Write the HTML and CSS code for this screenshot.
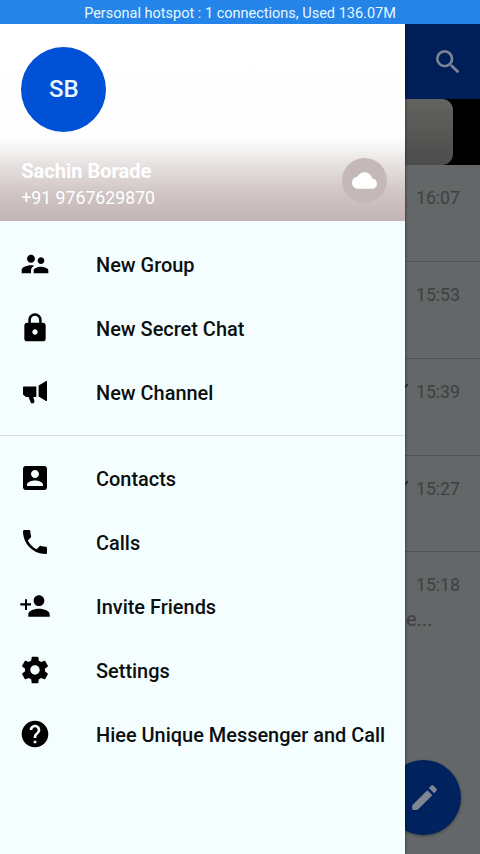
FILE: index.html
```html
<!DOCTYPE html>
<html lang="en">
<head>
<meta charset="utf-8">
<title>Hiee Messenger</title>
<link rel="stylesheet" href="styles.css">
</head>
<body>
<div class="status">Personal hotspot : 1 connections, Used 136.07M</div>
<div class="screen">
  <main class="chats">
    <header class="toolbar">
      <svg class="search" viewBox="0 0 24 24"><path d="M15.500 14h-.79l-.28-.27A6.470 6.470 0 0 0 16 9.500 6.500 6.500 0 1 0 9.500 16c1.610 0 3.090-.59 4.230-1.570l.27.28v.79l5 4.990L20.490 19l-4.990-5zm-6 0C7.010 14 5 11.990 5 9.500S7.010 5 9.500 5 14 7.010 14 9.500 11.990 14 9.500 14z"/></svg>
    </header>
    <div class="banner"><div class="banner-card"></div></div>
    <div class="chat"><div class="meta"><span class="time">16:07</span></div></div>
    <div class="chat"><div class="meta"><span class="time">15:53</span></div></div>
    <div class="chat"><div class="meta"><svg class="tick" viewBox="0 0 12 9"><path d="M1 4.500 4.500 8 11 1"/></svg><span class="time">15:39</span></div></div>
    <div class="chat"><div class="meta"><svg class="tick" viewBox="0 0 12 9"><path d="M1 4.500 4.500 8 11 1"/></svg><span class="time">15:27</span></div></div>
    <div class="chat last"><div class="meta"><span class="time">15:18</span></div><div class="preview">e...</div></div>
    <div class="fab"><svg viewBox="0 0 24 24"><path d="M4 16.800 14.100 6.700l3.600 3.600L7.600 20.400q-.5.600-1.300.6H4.100q-1.100 0-1.100-1.100v-1.600q0-.9 1-1.500zM20.710 7.040a1 1 0 0 0 0-1.410l-2.340-2.340a1 1 0 0 0-1.410 0l-1.830 1.830 3.750 3.750 1.830-1.830z"/></svg></div>
  </main>
  <aside class="drawer">
    <div class="profile">
      <div class="avatar">SB</div>
      <div class="identity">
        <div>
          <div class="name">Sachin Borade</div>
          <div class="phone">+91 9767629870</div>
        </div>
        <div class="cloud"><svg viewBox="0 0 24 24"><path d="M19.350 10.040A7.490 7.490 0 0 0 12 4C9.110 4 6.600 5.640 5.350 8.040A5.994 5.994 0 0 0 0 14c0 3.310 2.690 6 6 6h13c2.760 0 5-2.240 5-5 0-2.640-2.050-4.780-4.650-4.960z"/></svg></div>
      </div>
    </div>
    <nav class="menu">
      <div class="item"><svg viewBox="0 0 24 24"><path d="M16.500 12c1.380 0 2.490-1.120 2.490-2.500S17.880 7 16.500 7 14 8.120 14 9.500s1.120 2.500 2.500 2.500zM9 11c1.660 0 2.990-1.340 2.990-3S10.660 5 9 5 6 6.340 6 8s1.340 3 3 3zm7.500 3c-1.830 0-5.500.92-5.500 2.750V19h11v-2.250c0-1.830-3.670-2.750-5.500-2.750zM9 13c-2.330 0-7 1.170-7 3.500V19h7v-2.250c0-.85.33-2.340 2.370-3.470C10.500 13.100 9.660 13 9 13z"/></svg><span>New Group</span></div>
      <div class="item"><svg viewBox="0 0 24 24"><path d="M18 8h-1V6c0-2.760-2.240-5-5-5S7 3.240 7 6v2H6c-1.100 0-2 .9-2 2v10c0 1.100.9 2 2 2h12c1.100 0 2-.9 2-2V10c0-1.100-.9-2-2-2zm-6 9c-1.100 0-2-.9-2-2s.9-2 2-2 2 .9 2 2-.9 2-2 2zm3.100-9H8.900V6c0-1.710 1.390-3.100 3.100-3.100s3.100 1.390 3.100 3.100v2z"/></svg><span>New Secret Chat</span></div>
      <div class="item"><svg viewBox="0 0 24 24"><path d="M3.600 7.800H13v8h-2.300l.9 3.200-.5 1.400H9L7.200 15.800H5.200L3 13.800V8.300zM14.700 7.200 20.400 3.700H21v15h-.7l-5.600-3.400z"/></svg><span>New Channel</span></div>
      <hr>
      <div class="item"><svg viewBox="0 0 24 24"><path d="M3 5v14c0 1.100.89 2 2 2h14c1.100 0 2-.9 2-2V5c0-1.100-.9-2-2-2H5c-1.110 0-2 .9-2 2zm12 4c0 1.660-1.340 3-3 3s-3-1.340-3-3 1.340-3 3-3 3 1.340 3 3zm-9 8c0-2 4-3.100 6-3.100s6 1.100 6 3.100v1H6v-1z"/></svg><span>Contacts</span></div>
      <div class="item"><svg viewBox="0 0 24 24"><path d="M6.620 10.790c1.440 2.830 3.760 5.140 6.590 6.590l2.200-2.200c.27-.27.67-.36 1.020-.24 1.120.37 2.330.57 3.570.57.55 0 1 .45 1 1V20c0 .55-.45 1-1 1C10.610 21 3 13.390 3 4c0-.55.450-1 1-1h3.500c.55 0 1 .45 1 1 0 1.250.2 2.450.57 3.570.110.350.030.740-.25 1.020l-2.200 2.200z"/></svg><span>Calls</span></div>
      <div class="item"><svg viewBox="0 0 24 24"><path d="M15 12c2.210 0 4-1.790 4-4s-1.790-4-4-4-4 1.790-4 4 1.790 4 4 4zm-9-2V7H4.500v3H1v1.600h3.500V15H6v-3.400h3V10H6zm9 4c-2.670 0-8 1.340-8 4v2h16v-2c0-2.660-5.330-4-8-4z"/></svg><span>Invite Friends</span></div>
      <div class="item"><svg viewBox="0 0 24 24"><path d="M19.430 12.980c.04-.32.07-.64.07-.98s-.03-.66-.07-.98l2.110-1.650c.19-.15.24-.42.120-.64l-2-3.460c-.12-.22-.39-.3-.61-.22l-2.490 1c-.52-.4-1.080-.73-1.690-.98l-.38-2.650C14.460 2.180 14.250 2 14 2h-4c-.25 0-.46.180-.49.420l-.38 2.650c-.61.25-1.170.59-1.690.98l-2.490-1c-.23-.09-.49 0-.61.22l-2 3.460c-.13.22-.07.49.12.64l2.110 1.650c-.04.32-.07.65-.07.98s.03.66.07.98l-2.110 1.650c-.19.15-.24.42-.12.64l2 3.460c.12.22.39.3.61.22l2.490-1c.52.4 1.080.73 1.690.98l.38 2.650c.03.24.24.42.49.42h4c.25 0 .46-.18.49-.42l.38-2.650c.61-.25 1.170-.59 1.690-.98l2.490 1c.23.09.49 0 .61-.22l2-3.460c.12-.22.07-.49-.12-.64l-2.110-1.650zM12 15.500c-1.930 0-3.500-1.570-3.500-3.500s1.570-3.500 3.500-3.500 3.500 1.570 3.500 3.500-1.570 3.500-3.500 3.500z"/></svg><span>Settings</span></div>
      <div class="item"><svg viewBox="0 0 24 24"><path d="M12 2C6.480 2 2 6.480 2 12s4.480 10 10 10 10-4.480 10-10S17.520 2 12 2zm1 17h-2v-2h2v2zm2.070-7.750-.9.920C13.450 12.900 13 13.500 13 15h-2v-.5c0-1.100.45-2.100 1.170-2.830l1.240-1.260c.37-.36.59-.86.59-1.410 0-1.100-.9-2-2-2s-2 .9-2 2H8c0-2.210 1.790-4 4-4s4 1.790 4 4c0 .88-.36 1.680-.93 2.250z"/></svg><span>Hiee Unique Messenger and Call</span></div>
    </nav>
  </aside>
</div>
</body>
</html>
```
FILE: styles.css
```css
* { box-sizing: border-box; }
body {
  margin: 0;
  height: 854px;
  overflow: hidden;
  display: flex;
  flex-direction: column;
  font-family: Roboto, "Liberation Sans", sans-serif;
}
.status {
  height: 24px;
  flex: none;
  background: #2484e8;
  color: #e6f8ff;
  font-size: 14.500px;
  line-height: 27px;
  text-align: center;
  white-space: nowrap;
}
.screen { position: relative; flex: 1; }
.chats { height: 100%; background: #636767; }
.toolbar {
  height: 75px;
  background: #001f58;
  display: flex;
  justify-content: flex-end;
  align-items: center;
  padding-right: 16px;
}
.search { width: 32px; height: 32px; fill: #7c8697; }
.banner { height: 66px; background: #000; }
.banner-card {
  width: 453px;
  height: 66px;
  border-radius: 11px;
  background: linear-gradient(#636360, #4c4c4c);
}
.chat {
  height: 96.700px;
  border-bottom: 1px solid #505353;
  padding: 23px 20px 0 0;
  color: #3e4141;
}
.chat:nth-of-type(2) { height: 97.200px; }
.chat.last { border: 0; }
.meta { display: flex; justify-content: flex-end; }
.time { font-size: 17.700px; line-height: 21px; }
.tick { width: 13px; height: 10px; margin: 1px 7px 0 0; fill: none; stroke: #17351f; stroke-width: 1.600; }
.preview { padding-left: 406px; margin-top: 11px; font-size: 20px; line-height: 24px; }
.fab {
  position: absolute;
  right: 19px;
  bottom: 19px;
  width: 75px;
  height: 75px;
  border-radius: 50%;
  background: #00225f;
  box-shadow: 0 1px 3px rgba(0, 0, 0, .4);
  display: grid;
  place-items: center;
}
.fab svg { width: 33px; height: 33px; margin-left: 2px; fill: #7e8593; }
.drawer {
  position: absolute;
  inset: 0 auto 0 0;
  width: 405.300px;
  background: #f5feff;
  box-shadow: 0 0 3px rgba(0, 0, 0, .6);
  clip-path: inset(0 -6px 0 0);
}
.profile {
  height: 197px;
  padding: 22.500px 18.500px 0 21.300px;
  background: linear-gradient(#fff 0, #fefefe 112px, #f5f4f3 125px, #e5e0df 142px, #d0c4c4 170px, #c3b5b5 197px);
}
.avatar {
  width: 85px;
  height: 85px;
  border-radius: 50%;
  background: #0051d5;
  color: #e9f7ff;
  font-size: 24px;
  font-weight: 500;
  display: grid;
  place-items: center;
}
.identity { display: flex; justify-content: space-between; padding-top: 26px; color: #fff; }
.name { font-size: 20px; font-weight: 700; line-height: 26px; }
.phone { font-size: 17.700px; line-height: 24px; margin-top: 2px; }
.cloud {
  width: 45px;
  height: 45px;
  border-radius: 50%;
  background: #c5b8b8;
  display: grid;
  place-items: center;
}
.cloud svg { width: 25px; height: 25px; fill: #fff; }
.menu { padding-top: 11px; }
.item {
  height: 64px;
  display: flex;
  align-items: center;
  gap: 45.500px;
  padding: 0 16px 0 18.500px;
  color: #0b0f10;
  font-size: 19.950px;
  font-weight: 500;
}
.item svg { width: 32px; height: 32px; flex: none; fill: #000; }
.item span { white-space: nowrap; padding-top: 2px; }
hr { margin: 10.500px 0 10.500px; border: 0; height: 1px; background: #d7dfe0; }
```
